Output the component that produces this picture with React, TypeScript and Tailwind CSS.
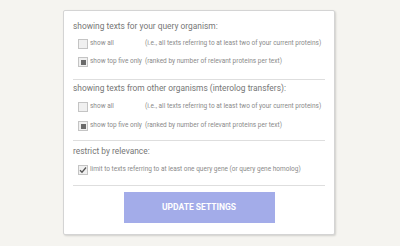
import React from "react";

function Box({ state }: { state: "empty" | "filled" | "check" }) {
  return (
    <div className="w-[10px] h-[10px] border border-[#c4c4c4] bg-[#f0f0f0] flex items-center justify-center shrink-0">
      {state === "filled" && <div className="w-[5px] h-[5px] bg-[#6a6a6a]" />}
      {state === "check" && (
        <svg width="8" height="8" viewBox="0 0 8 8">
          <path d="M1 4.2 L3 6.2 L7 1.5" stroke="#555" strokeWidth="1.3" fill="none" />
        </svg>
      )}
    </div>
  );
}

function Row({ state, label, note }: { state: "empty" | "filled" | "check"; label: string; note?: string }) {
  return (
    <div className="flex items-center h-[18px] pl-[5px] text-[6.5px] text-[#8a8a8a]">
      <Box state={state} />
      <div className={note !== undefined ? "w-[57px] pl-[2px] whitespace-nowrap" : "pl-[2px] whitespace-nowrap"}>{label}</div>
      {note && <div className="whitespace-nowrap">{note}</div>}
    </div>
  );
}

function Heading({ children }: { children: React.ReactNode }) {
  return <div className="h-[14px] leading-[14px] text-[8.4px] text-[#767676] whitespace-nowrap">{children}</div>;
}

export default function App() {
  return (
    <div className="w-[400px] h-[246px] bg-[#f5f4f0] pt-[10px] overflow-hidden" style={{ fontFamily: "Roboto, 'Liberation Sans', sans-serif" }}>
      <div className="ml-[63px] w-[272px] h-[225px] bg-white border border-[#d4d4d4] rounded-[2px] shadow-[1px_1px_2px_rgba(0,0,0,0.15)] px-[9px] pt-[8px]">
        <Heading>showing texts for your query organism:</Heading>
        <div className="h-[2px]" />
        <Row state="empty" label="show all" note="(i.e., all texts referring to at least two of your current proteins)" />
        <Row state="filled" label="show top five only" note="(ranked by number of relevant proteins per text)" />
        <div className="mt-[8px] h-px bg-[#dedede]" />
        <div className="mt-[1px]">
          <Heading>showing texts from other organisms (interolog transfers):</Heading>
        </div>
        <div className="h-[3px]" />
        <Row state="empty" label="show all" note="(i.e., all texts referring to at least two of your current proteins)" />
        <div className="h-[1px]" />
        <Row state="filled" label="show top five only" note="(ranked by number of relevant proteins per text)" />
        <div className="mt-[5px] h-px bg-[#dedede]" />
        <div className="mt-[3px]">
          <Heading>restrict by relevance:</Heading>
        </div>
        <div className="h-[3px]" />
        <Row state="check" label="limit to texts referring to at least one query gene (or query gene homolog)" />
        <div className="mt-[6px] h-px bg-[#dedede]" />
        <div className="flex justify-center mt-[6px]">
          <div className="w-[151px] h-[31px] bg-[#a3ace9] text-white text-[8.5px] font-bold flex items-center justify-center">UPDATE SETTINGS</div>
        </div>
      </div>
    </div>
  );
}
